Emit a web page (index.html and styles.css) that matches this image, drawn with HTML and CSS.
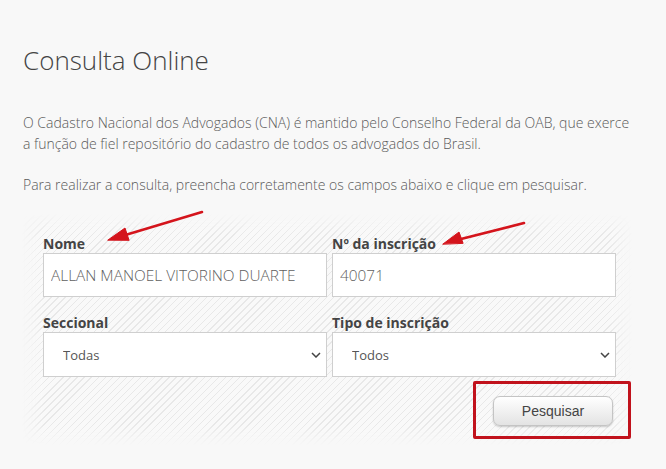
FILE: index.html
```html
<!DOCTYPE html>
<html lang="pt-BR">
<head>
<meta charset="utf-8">
<title>Consulta Online</title>
<link rel="stylesheet" href="styles.css">
</head>
<body>
<main class="page">
  <h1 class="title">Consulta Online</h1>
  <p class="intro">O Cadastro Nacional dos Advogados (CNA) é mantido pelo Conselho Federal da OAB, que exerce a função de fiel repositório do cadastro de todos os advogados do Brasil.</p>
  <p class="intro">Para realizar a consulta, preencha corretamente os campos abaixo e clique em pesquisar.</p>

  <form class="panel">
    <div class="grid">
      <div class="field">
        <label class="label" for="nome">Nome</label>
        <input class="input" id="nome" type="text" value="ALLAN MANOEL VITORINO DUARTE">
      </div>
      <div class="field">
        <label class="label" for="insc">Nº da inscrição</label>
        <input class="input" id="insc" type="text" value="40071">
      </div>
      <div class="field">
        <label class="label" for="secc">Seccional</label>
        <div class="select-wrap">
          <select class="select" id="secc"><option>Todas</option></select>
          <svg class="chev" width="10" height="6" viewBox="0 0 10 6"><path d="M1 1 L5 5 L9 1" fill="none" stroke="#444" stroke-width="1.5"/></svg>
        </div>
      </div>
      <div class="field">
        <label class="label" for="tipo">Tipo de inscrição</label>
        <div class="select-wrap">
          <select class="select" id="tipo"><option>Todos</option></select>
          <svg class="chev" width="10" height="6" viewBox="0 0 10 6"><path d="M1 1 L5 5 L9 1" fill="none" stroke="#444" stroke-width="1.5"/></svg>
        </div>
      </div>
    </div>
    <div class="actions">
      <button class="btn" type="button">Pesquisar</button>
    </div>
  </form>

  <div class="highlight"></div>
  <svg class="arrows" width="666" height="469" viewBox="0 0 666 469">
    <g stroke="#d4141c" stroke-linecap="round" fill="#d4141c">
      <line x1="202" y1="212" x2="122" y2="236" stroke-width="2.6"/>
      <polygon points="108,240 125,228 129,240" stroke-width="1"/>
      <line x1="524" y1="223" x2="457" y2="240" stroke-width="2.6"/>
      <polygon points="443,244 459,232 463,243" stroke-width="1"/>
    </g>
  </svg>
</main>
</body>
</html>
```

FILE: styles.css
```css
* { box-sizing: border-box; }
html, body { margin: 0; padding: 0; background: #f8f8f8; }
body { font-family: "Open Sans", "Liberation Sans", sans-serif; color: #555; }

.page {
  position: relative;
  width: 666px;
  height: 469px;
  padding: 44px 0 0 23px;
  overflow: hidden;
}

.title {
  margin: 0 0 36px;
  font-size: 26px;
  line-height: 32px;
  font-weight: 300;
  color: #444;
}

.intro {
  margin: 0 0 20px;
  font-size: 14px;
  line-height: 21px;
  font-weight: 300;
  color: #5a5a5a;
  width: 615px;
}

.panel {
  position: relative;
  width: 610px;
  margin: -1px 0 0 -1px;
  padding: 20px 16px 19px 21px;
}
.panel::before {
  content: "";
  position: absolute;
  inset: 0;
  z-index: 0;
  background: repeating-linear-gradient(135deg, #f9f9f9 0 4px, #e8e8e8 4px 5px);
  -webkit-mask-image: linear-gradient(to right, transparent 0, #000 22px, #000 calc(100% - 22px), transparent 100%),
                      linear-gradient(to bottom, transparent 0, #000 20px, #000 calc(100% - 20px), transparent 100%);
  -webkit-mask-composite: source-in;
  mask-composite: intersect;
}

.grid {
  position: relative;
  z-index: 1;
  display: grid;
  grid-template-columns: 284px 284px;
  column-gap: 5px;
  row-gap: 16px;
}

.field { display: flex; flex-direction: column; }

.label {
  font-size: 14px;
  line-height: 19px;
  font-weight: 700;
  color: #444;
}

.input {
  height: 44px;
  margin: 0;
  border: 1px solid #cfcfcf;
  background: #fff;
  padding: 0 7px;
  font-family: "Open Sans", sans-serif;
  font-size: 15.4px;
  font-weight: 300;
  color: #5f5f5f;
  outline: none;
}

.select-wrap { position: relative; }
.select {
  display: block;
  width: 100%;
  height: 45px;
  margin: 0;
  border: 1px solid #cfcfcf;
  border-radius: 0;
  background: #fff;
  -webkit-appearance: none;
  appearance: none;
  padding: 0 0 0 19px;
  font-family: "Open Sans", sans-serif;
  font-size: 13px;
  color: #555;
}
.chev {
  position: absolute;
  right: 6px;
  top: 20px;
}

.actions {
  position: relative;
  z-index: 1;
  display: flex;
  justify-content: flex-end;
  padding: 19px 3px 0 0;
}

.btn {
  width: 120px;
  height: 30px;
  border: 1px solid #c4c4c4;
  border-radius: 7px;
  background: linear-gradient(#ffffff, #e3e3e3);
  box-shadow: 0 1px 2px rgba(0,0,0,0.2);
  font-family: "Liberation Sans", Arial, sans-serif;
  font-size: 14px;
  color: #444;
}

.highlight {
  position: absolute;
  left: 473px;
  top: 381px;
  width: 158px;
  height: 58px;
  border: 3px solid #c1121c;
  border-radius: 2px;
}

.arrows {
  position: absolute;
  left: 0;
  top: 0;
  pointer-events: none;
}
```
